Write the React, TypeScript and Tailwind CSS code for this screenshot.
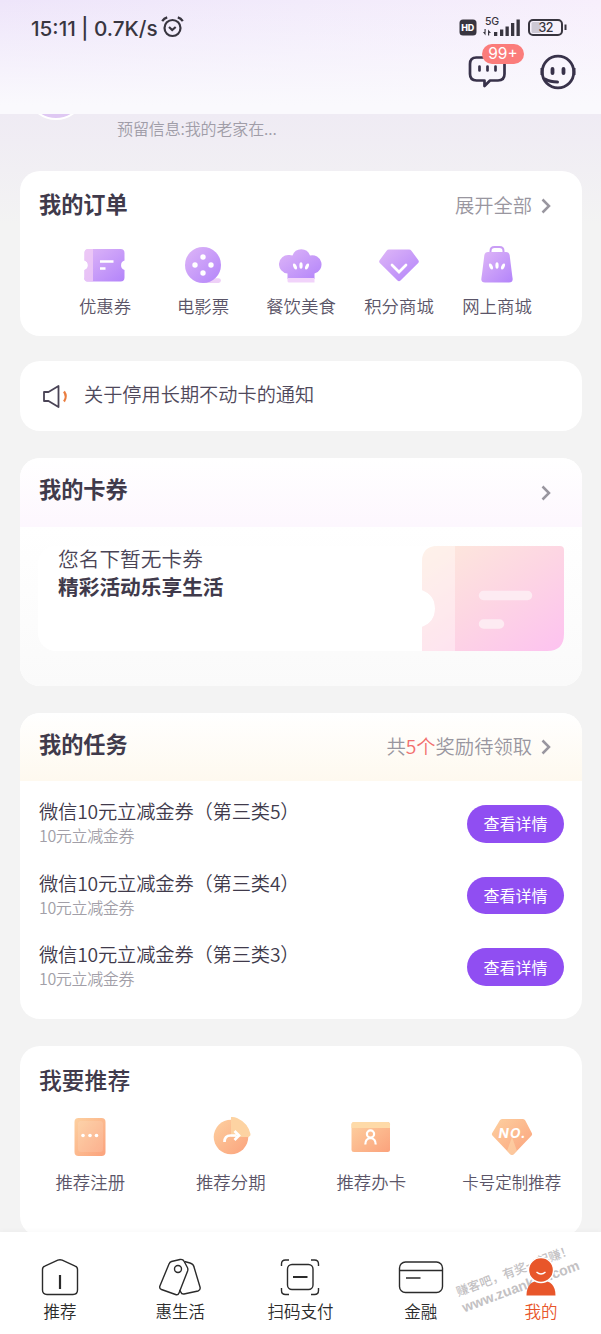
import type { ReactNode } from 'react';

const orders = [
  { label: '优惠券', icon: <CouponIcon /> },
  { label: '电影票', icon: <MovieIcon /> },
  { label: '餐饮美食', icon: <ChefHatIcon /> },
  { label: '积分商城', icon: <DiamondIcon /> },
  { label: '网上商城', icon: <BagIcon /> },
];

const tasks = [
  { title: '微信10元立减金券（第三类5）', desc: '10元立减金券' },
  { title: '微信10元立减金券（第三类4）', desc: '10元立减金券' },
  { title: '微信10元立减金券（第三类3）', desc: '10元立减金券' },
];

function PurpleGradient({ id }: { id: string }) {
  return (
    <defs>
      <linearGradient id={id} x1="0" y1="0" x2="1" y2="1">
        <stop offset="0" stopColor="#deb6f7" />
        <stop offset="1" stopColor="#b384fa" />
      </linearGradient>
    </defs>
  );
}

function OrangeGradient({ id }: { id: string }) {
  return (
    <defs>
      <linearGradient id={id} x1="0" y1="0" x2="1" y2="1">
        <stop offset="0" stopColor="#fdd0a0" />
        <stop offset="1" stopColor="#fba27c" />
      </linearGradient>
    </defs>
  );
}

function CouponIcon() {
  return (
    <svg width="44" height="44" viewBox="0 0 44 44">
      <PurpleGradient id="coupon" />
      <path
        d="M4.500 6h33a4 4 0 0 1 4 4v7.500a5 5 0 0 0 0 9.500v7.500a4 4 0 0 1-4 4h-33a3 3 0 0 1-3-4V27a5 5 0 0 0 0-9.500V10a4 4 0 0 1 3-4Z"
        fill="url(#coupon)"
      />
      <path d="M4.500 6H10v32.500H4.500a3 3 0 0 1-3-4V27a5 5 0 0 0 0-9.500V10a4 4 0 0 1 3-4Z" fill="#f1cdf5" opacity=".75" />
      <path d="M17 18.500h13.500M17 25.500h5.500" stroke="#fff" strokeWidth="2.500" />
    </svg>
  );
}

function MovieIcon() {
  return (
    <svg width="44" height="44" viewBox="0 0 44 44">
      <PurpleGradient id="movie" />
      <path d="M22 40h15.500a2.200 2.200 0 0 0 0-4.800H25Z" fill="#eed0f7" />
      <circle cx="22" cy="22" r="18" fill="url(#movie)" />
      <g fill="#fff">
        <circle cx="22" cy="14" r="2.700" />
        <circle cx="14" cy="22" r="2.700" />
        <circle cx="30" cy="22" r="2.700" />
        <circle cx="22" cy="30" r="2.700" />
      </g>
    </svg>
  );
}

function Seeds() {
  return (
    <g fill="#fff">
      <ellipse cx="16" cy="23.500" rx="1.600" ry="3.200" transform="rotate(-25 16 23.500)" />
      <ellipse cx="22" cy="22.500" rx="1.600" ry="3.200" />
      <ellipse cx="28" cy="23.500" rx="1.600" ry="3.200" transform="rotate(25 28 23.500)" />
    </g>
  );
}

function ChefHatIcon() {
  return (
    <svg width="44" height="44" viewBox="0 0 44 44">
      <PurpleGradient id="chef" />
      <path
        d="M8.500 36V30.500A9.200 9.200 0 0 1 10 12a10 10 0 0 1 3.500.5A9.300 9.300 0 0 1 31 12.500a9.200 9.200 0 1 1 4.500 18V36Z"
        fill="url(#chef)"
      />
      <path d="M8.500 35h27v4.500H10a1.500 1.500 0 0 1-1.500-1.500Z" fill="#f1d3fa" />
      <Seeds />
    </svg>
  );
}

function DiamondIcon() {
  return (
    <svg width="44" height="44" viewBox="0 0 44 44">
      <PurpleGradient id="diamond" />
      <path
        d="M12 6.500h20q1.500 0 2.400 1.200l7 9.600q1 1.400-.2 2.700L23.500 37.500q-1.500 1.500-3 0L2.800 20q-1.200-1.300-.2-2.700l7-9.600Q10.500 6.500 12 6.500Z"
        fill="url(#diamond)"
      />
      <path d="m15 22 7 7 7-7" fill="none" stroke="#fff" strokeWidth="2.700" strokeLinecap="round" />
    </svg>
  );
}

function BagIcon() {
  return (
    <svg width="44" height="44" viewBox="0 0 44 44">
      <PurpleGradient id="bag" />
      <path d="M15.500 10V8q0-4 4-4h5q4 0 4 4v2" fill="none" stroke="#c99df5" strokeWidth="2" />
      <path d="M13 9h18q3 0 3.600 3l3 23.500q.4 4-3.600 4H10q-4 0-3.600-4l3-23.500Q10 9 13 9Z" fill="url(#bag)" />
      <Seeds />
    </svg>
  );
}

function RegisterIcon() {
  return (
    <svg width="44" height="44" viewBox="0 0 44 44">
      <OrangeGradient id="register" />
      <rect x="6.500" y="3" width="31" height="38" rx="4" fill="url(#register)" />
      <rect x="10" y="6" width="25" height="31" rx="3" fill="#fff" opacity=".12" />
      <g fill="#fff">
        <circle cx="15" cy="20.500" r="1.800" />
        <circle cx="22" cy="20.500" r="1.800" />
        <circle cx="28.500" cy="20.500" r="1.800" />
      </g>
    </svg>
  );
}

function InstallmentIcon() {
  return (
    <svg width="44" height="44" viewBox="0 0 44 44">
      <OrangeGradient id="installment" />
      <circle cx="22" cy="22" r="17.300" fill="url(#installment)" />
      <path d="M22 2q3-.5 6 1 11 5 13.500 16 .5 2-2 3H22Z" fill="#fdd3a2" />
      <path d="M15.500 27q0-6.500 6-6.500h6M25.500 16l4.500 4.500-4.500 4.500" fill="none" stroke="#fff" strokeWidth="2.700" />
    </svg>
  );
}

function ApplyCardIcon() {
  return (
    <svg width="44" height="44" viewBox="0 0 44 44">
      <OrangeGradient id="apply" />
      <rect x="2.500" y="7" width="38.500" height="30" rx="2.500" fill="url(#apply)" />
      <path d="M5 7h33.500q2.500 0 2.500 2.500V13H2.500V9.500Q2.500 7 5 7Z" fill="#fedaa8" />
      <circle cx="21.500" cy="19" r="3.600" fill="none" stroke="#fff" strokeWidth="2.200" />
      <path d="M16.300 29.500q0-6 5.200-6.500 5.200.5 5.200 6.500" fill="none" stroke="#fff" strokeWidth="2.200" />
    </svg>
  );
}

function CustomNumberIcon() {
  return (
    <svg width="44" height="44" viewBox="0 0 44 44">
      <OrangeGradient id="number" />
      <path
        d="M12 4h21q1.500 0 2.300 1.500l6.500 12.500q.8 1.500-.4 2.800L24 39q-2 2-4 0L2.600 20.800Q1.400 19.500 2.200 18L9.700 5.500Q10.500 4 12 4Z"
        fill="url(#number)"
      />
      <path d="m22 22 5 14-3 3q-2 2-4 0l-3-3Z" fill="#fde0b4" opacity=".5" />
      <text x="8.500" y="22.500" fill="#fff" fontSize="13.500" fontWeight="700" fontStyle="italic" fontFamily="Inter, sans-serif" textLength="27">
        NO.
      </text>
    </svg>
  );
}

const recommends = [
  { label: '推荐注册', icon: <RegisterIcon /> },
  { label: '推荐分期', icon: <InstallmentIcon /> },
  { label: '推荐办卡', icon: <ApplyCardIcon /> },
  { label: '卡号定制推荐', icon: <CustomNumberIcon /> },
];

function Chevron() {
  return (
    <svg width="10" height="16" viewBox="0 0 10 16" fill="none" stroke="#99969f" strokeWidth="2.500">
      <path d="m1.500 1.500 6.500 6.500-6.500 6.500" />
    </svg>
  );
}

function StatusBar() {
  return (
    <div className="flex h-[54px] items-center justify-between pl-[31px] pr-[33px] pt-px text-[#38353f]">
      <div className="flex items-center gap-[3px]">
        <span className="w-[127px] whitespace-nowrap pt-0.5 font-[Inter,sans-serif] text-[20.700px] font-medium">15:11 | 0.7K/s</span>
        <svg width="23" height="22" viewBox="0 0 23 22" fill="none" stroke="#38353f" strokeWidth="2.200">
          <circle cx="11.500" cy="12" r="8" />
          <path d="m8 11 3.200 3 3.500-3M1.200 5.200Q3 2.400 6.200 1.400M21.800 5.200Q20 2.400 16.800 1.400" />
        </svg>
      </div>
      <svg width="109" height="24" viewBox="0 0 109 24">
        <rect x="0.500" y="3.500" width="17" height="16" rx="3.500" fill="#38353f" />
        <text x="2.300" y="15" fontFamily="Inter, sans-serif" fontSize="9" fontWeight="800" fill="#fff" textLength="13">HD</text>
        <text x="26" y="9" fontFamily="Inter, sans-serif" fontSize="10.500" fontWeight="500" fill="#38353f" textLength="14">5G</text>
        <g fill="#38353f">
          <path d="m26.500 19.500-2.500-3.500h1.500v-3h1.200ZM29 13.500l3 3.500h-1.800v2.500H29Z" />
          <rect x="35" y="16" width="3.300" height="4" />
          <rect x="41" y="13.500" width="3.300" height="6.500" />
          <rect x="46.500" y="10.500" width="3.300" height="9.500" />
          <rect x="52" y="7" width="3.300" height="13" />
          <rect x="57.500" y="3.500" width="3.300" height="16.500" />
        </g>
        <rect x="70" y="4" width="33" height="15" rx="4" fill="none" stroke="#38353f" strokeWidth="2" />
        <rect x="72.500" y="6" width="9" height="11" rx="1.500" fill="#cdc8d4" />
        <path d="M106.500 8.500v5.500" stroke="#38353f" strokeWidth="2" />
        <text x="79.500" y="15.900" fontFamily="Inter, sans-serif" fontSize="12.500" fontWeight="500" fill="#38353f" textLength="15">32</text>
      </svg>
    </div>
  );
}

function Header() {
  return (
    <header className="h-[114px] bg-[linear-gradient(180deg,rgba(250,248,253,0)_0%,#faf9fd_92%),linear-gradient(90deg,#eee5fa_0%,#f2ebfb_50%,#f7effc_100%)]">
      <StatusBar />
      <div className="flex justify-end gap-[32px] pr-[25px]">
        <div className="relative h-9 w-[40px]">
          <svg width="40" height="36" viewBox="0 0 40 36" fill="none" stroke="#38324a" strokeWidth="2.700">
            <path d="M8 3.500h22q6.500 0 6.500 6.500v10q0 6.500-6.500 6.500h-8L16.500 32v-5.500H8.500Q2 26.500 2 20V10q0-6.500 6.500-6.500Z" strokeLinejoin="round" />
            <path d="M11.500 12.500v4M19.500 12.500v4M27.500 12.500v4" strokeLinecap="round" />
          </svg>
          <span className="absolute -top-[10px] left-[14px] flex h-5 w-[42px] items-center justify-center rounded-full bg-[#fb7c7b] font-[Inter,sans-serif] text-[15.500px] text-white">
            99+
          </span>
        </div>
        <svg width="36" height="36" viewBox="0 0 36 36" fill="none" stroke="#38324a">
          <circle cx="18" cy="18" r="15.800" strokeWidth="2.800" />
          <path d="M2 14v7M34 14v7" strokeWidth="3" />
          <path d="M12.500 15v4M23.500 15v4" strokeWidth="3.800" strokeLinecap="round" />
          <path d="M5 25q5 3 12.500 3" strokeWidth="3" strokeLinecap="round" />
        </svg>
      </div>
    </header>
  );
}

function IconTile({ label, icon, labelClass }: { label: string; icon: ReactNode; labelClass: string }) {
  return (
    <div className="flex flex-col items-center">
      {icon}
      <span className={`whitespace-nowrap font-[350] leading-6 text-[#5b5568] ${labelClass}`}>{label}</span>
    </div>
  );
}

function OrdersCard() {
  return (
    <section className="h-[165px] rounded-[20px] bg-white">
      <div className="flex h-[69px] items-center justify-between pl-[19px] pr-[31px]">
        <h2 className="pb-[4px] text-[22.200px] font-bold text-[#403a4b]">我的订单</h2>
        <div className="flex items-center gap-[9px] text-[19.300px] font-[350] text-[#99969f]">
          <span>展开全部</span>
          <Chevron />
        </div>
      </div>
      <div className="grid grid-cols-5 px-[36px] pt-[3px]">
        {orders.map((item) => (
          <IconTile key={item.label} {...item} labelClass="mt-[7px] text-[17.400px]" />
        ))}
      </div>
    </section>
  );
}

function NoticeCard() {
  return (
    <section className="mt-[25px] flex h-[70px] items-center gap-[15px] rounded-[20px] bg-white pl-[22px]">
      <svg width="27" height="26" viewBox="0 0 27 26" fill="none">
        <path d="M2 9h4.500L16.500 3v21L6.500 18H2Z" stroke="#4a4456" strokeWidth="1.800" strokeLinejoin="round" />
        <path d="M22 8.500q3.500 5 0 10" stroke="#ea7d3f" strokeWidth="2.200" />
      </svg>
      <span className="pb-[3px] text-[19.200px] font-[350] text-[#4f495b]">关于停用长期不动卡的通知</span>
    </section>
  );
}

function TicketArt() {
  return (
    <svg width="142" height="106" viewBox="0 0 142 106">
      <defs>
        <linearGradient id="ticket" x1="0" y1="0" x2="1" y2="1">
          <stop offset="0" stopColor="#fdeadb" />
          <stop offset=".5" stopColor="#fdd6e3" />
          <stop offset="1" stopColor="#fdc2f0" />
        </linearGradient>
      </defs>
      <path
        d="M16 0H138q4 0 4 4V88q0 17-17 17H0V81q13-5 13-18.500T0 44V16Q0 0 16 0Z"
        fill="url(#ticket)"
      />
      <path d="M16 0H33V105H0V81q13-5 13-18.500T0 44V16Q0 0 16 0Z" fill="#fff" opacity=".4" />
      <path d="M61.500 49.500h44M61.500 78h16" stroke="#fdebf2" strokeWidth="9.500" strokeLinecap="round" />
    </svg>
  );
}

function CouponsCard() {
  return (
    <section className="mt-[27px] h-[228px] overflow-hidden rounded-[20px] bg-white">
      <div className="flex h-[69px] items-center justify-between bg-linear-to-b from-white to-[#fdf7fe] pl-[19px] pr-[31px]">
        <h2 className="pb-[7px] text-[22.200px] font-bold text-[#403a4b]">我的卡券</h2>
        <Chevron />
      </div>
      <div className="h-[159px] bg-linear-to-b from-white to-[#fafafa] px-[18px] pt-[19px]">
        <div className="flex h-[105px] justify-between rounded-[18px] bg-white pl-5">
          <div className="-mt-[2px] text-[20.700px] leading-[28px] text-[#4a4456]">
            <p className="font-[350]">您名下暂无卡券</p>
            <p className="font-bold text-[#403a4b]">精彩活动乐享生活</p>
          </div>
          <TicketArt />
        </div>
      </div>
    </section>
  );
}

function TasksCard() {
  return (
    <section className="mt-[27px] h-[306px] overflow-hidden rounded-[20px] bg-white">
      <div className="flex h-[68px] items-center justify-between bg-linear-to-b from-white to-[#fef9ef] pl-[19px] pr-[31px]">
        <h2 className="pb-[6px] text-[22.200px] font-bold text-[#403a4b]">我的任务</h2>
        <div className="flex items-center gap-[9px] text-[19.300px] font-[350] text-[#99969f]">
          <span className="pb-0.5">
            共<span className="text-[#f2706f]">5个</span>奖励待领取
          </span>
          <Chevron />
        </div>
      </div>
      <div className="pl-[19px] pr-[18px] pt-[18px]">
        {tasks.map((task) => (
          <div key={task.title} className="flex h-[71.700px] items-start justify-between">
            <div>
              <p className="text-[19.300px] font-[350] leading-[25px] tracking-[-0.180px] text-[#403a4b]">{task.title}</p>
              <p className="text-[16px] font-[350] leading-[22px] tracking-[-0.350px] text-[#a29fa8]">{task.desc}</p>
            </div>
            <button className="mt-[6px] h-[37.500px] w-[97px] rounded-full bg-[#904ef2] pb-px text-[16px] text-white">查看详情</button>
          </div>
        ))}
      </div>
    </section>
  );
}

function RecommendCard() {
  return (
    <section className="mt-[27px] h-[190px] rounded-[20px] bg-white">
      <h2 className="flex h-[69px] items-center pl-[19px] text-[22.800px] font-medium text-[#403a4b]">我要推荐</h2>
      <div className="grid grid-cols-4">
        {recommends.map((item) => (
          <IconTile
            key={item.label}
            {...item}
            labelClass={item.label.length > 4 ? 'mt-[11px] text-[16.500px]' : 'mt-[11px] text-[17.400px]'}
          />
        ))}
      </div>
    </section>
  );
}

function NavItem({ label, active, children }: { label: string; active?: boolean; children: ReactNode }) {
  return (
    <div className={`relative flex flex-col items-center ${active ? 'text-[#e8562a]' : 'text-[#2b2b2b]'}`}>
      <svg width="46" height="40" viewBox="0 0 46 40" fill="none" stroke="currentColor" strokeWidth="1.400">
        {children}
      </svg>
      <span className="mt-[2px] text-[16.500px] font-[350] leading-6">{label}</span>
    </div>
  );
}

function BottomNav() {
  return (
    <nav className="relative grid h-[102px] grid-cols-5 bg-white pt-[25px] shadow-[0_-1px_5px_rgba(0,0,0,0.03)]">
      <div className="absolute left-[455px] top-[25px] w-[150px] -rotate-[20.500deg] whitespace-nowrap text-[#c3c1c3]">
        <p className="text-[12.300px] leading-[17px] font-medium">赚客吧，有奖一起赚！</p>
        <p className="font-['Liberation_Sans',sans-serif] text-[14px] font-bold leading-[17px]">www.zuanke8.com</p>
      </div>
      <NavItem label="推荐">
        <path d="M5.500 12.500q0-2.500 2.300-3.300l13-6q2.200-1 4.400 0l13 6q2.300.8 2.300 3.300V33q0 4.500-4.500 4.500H10Q5.500 37.500 5.500 33Z" />
        <path d="M23 18v14" strokeWidth="2.200" />
      </NavItem>
      <NavItem label="惠生活">
        <path d="M14.500 4.500 23 2.500q3-.5 4.200 2l3.200 6q.8 1.500.2 3.500L22 36q-1 2.500-3.500 1.500L4.500 32.500q-2.500-1-1.600-3.500L12 7q.8-2 2.500-2.500Z" />
        <path d="M27.500 4.500 33 6q3.500 1 4 4l6 20q.8 3-2 4l-14 3q-2.500.3-3.200-2L22.500 33" />
        <circle cx="21" cy="12" r="3.500" />
      </NavItem>
      <NavItem label="扫码支付">
        <path d="M4.500 9V7q0-4 4-4H12M34 3h3.500q4 0 4 4v2M4.500 31v2.500q0 4 4 4H12M34 37.500h3.500q4 0 4-4V31" />
        <rect x="10.500" y="7.500" width="25.500" height="25" rx="4.500" />
        <path d="M16 20h14.500" strokeWidth="2" />
      </NavItem>
      <NavItem label="金融">
        <rect x="1.500" y="5" width="43" height="30.500" rx="6" />
        <path d="M2 13.500h42M8 21h14.500" />
      </NavItem>
      <NavItem label="我的" active>
        <path d="M8.500 38.500q0-15 14.500-15t14.500 15Z" fill="currentColor" stroke="none" />
        <circle cx="23" cy="13" r="12.500" fill="currentColor" stroke="#fff" />
        <path d="M18.500 15q4.500 4 9 0" stroke="#fff" />
      </NavItem>
    </nav>
  );
}

export default function App() {
  return (
    <div className="flex h-[1334px] w-[601px] flex-col overflow-hidden bg-[#f3f3f3] font-['Noto_Sans_CJK_SC',sans-serif]">
      <Header />
      <main className="h-[1118px] overflow-hidden bg-[linear-gradient(180deg,#efebf4_0px,#f3f3f3_110px)]">
        <div className="flex h-[57px] pl-[31px]">
          {/* bottom edge of the avatar, the rest sits under the header */}
          <div className="flex h-[6px] w-[49px] items-end justify-center overflow-hidden">
            <div className="size-[60px] shrink-0 rounded-full border-2 border-white bg-[#dfc8f3]" />
          </div>
          <p className="pl-[37px] pt-[3px] text-[16px] font-[350] leading-[22px] tracking-[-0.120px] text-[#a09da8]">
            预留信息:我的老家在...
          </p>
        </div>
        <div className="pl-[20px] pr-[19px]">
          <OrdersCard />
          <NoticeCard />
          <CouponsCard />
          <TasksCard />
          <RecommendCard />
        </div>
      </main>
      <BottomNav />
    </div>
  );
}
